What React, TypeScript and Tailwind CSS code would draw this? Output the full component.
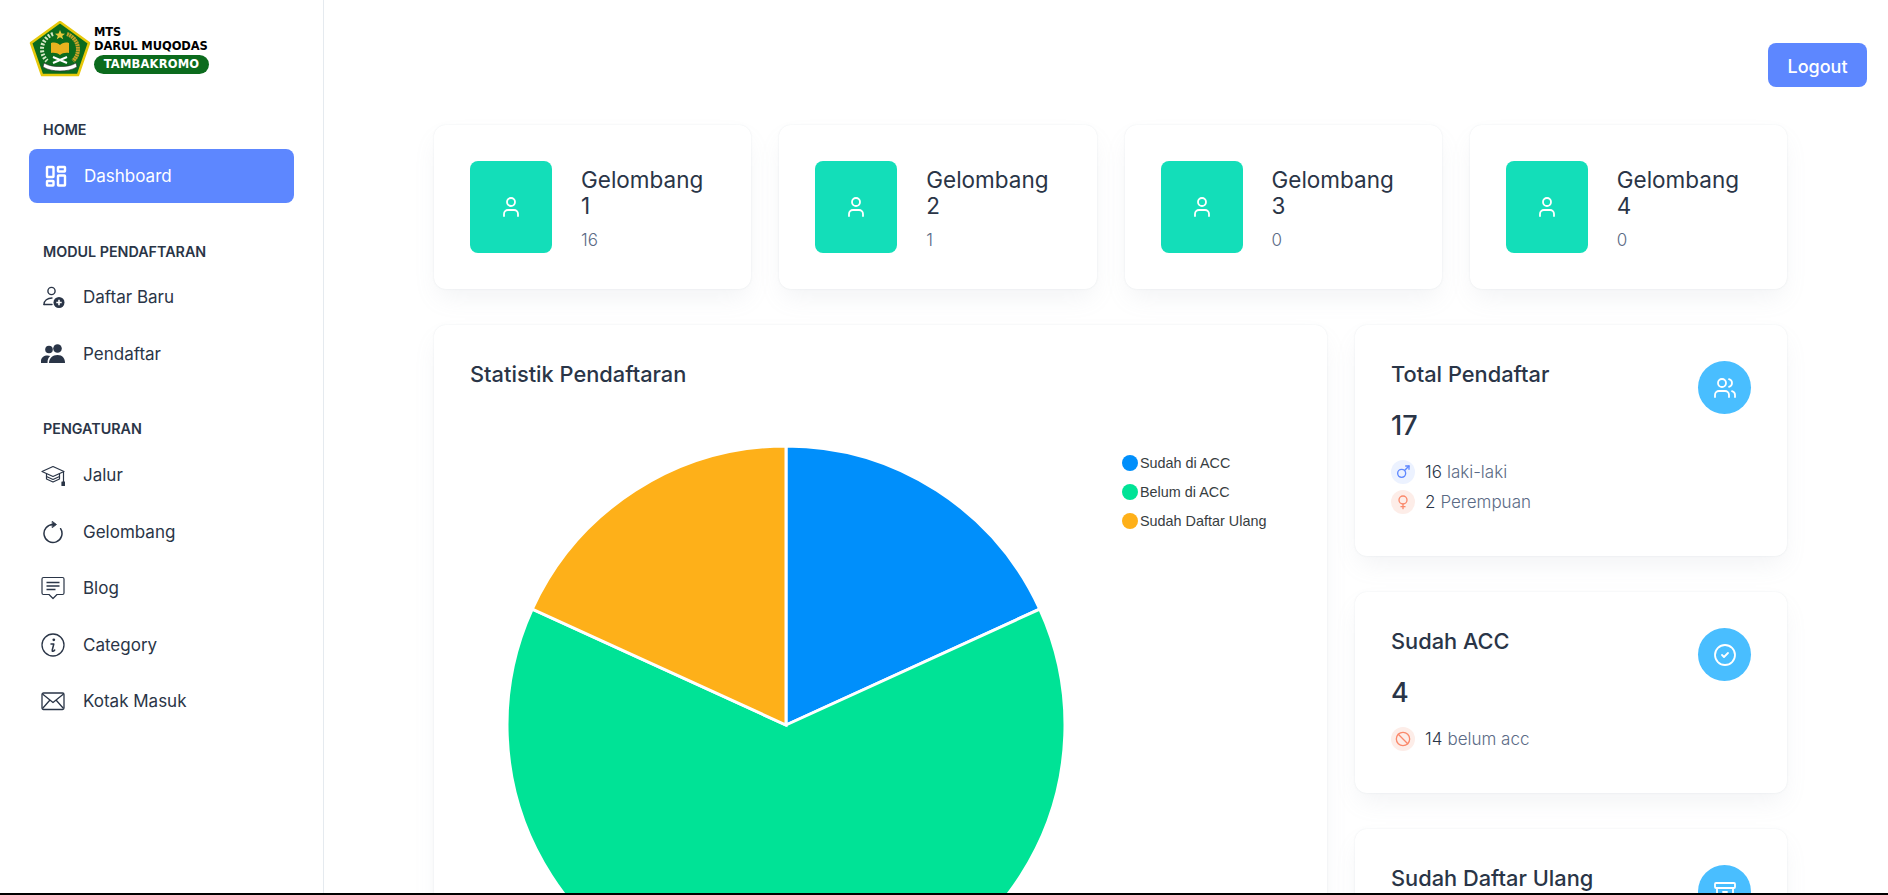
import { CircleCheck, Ban, Mars, Venus, User, Users, Archive } from "lucide-react";
import type { ReactNode } from "react";

const font = "font-['Inter','Noto_Sans',sans-serif]";

const UserPlusIcon = () => (
  <svg viewBox="0 0 24 24" className="size-6 text-[#2a3547]" fill="none" stroke="currentColor" strokeWidth="1.4">
    <circle cx="10.500" cy="6" r="3.600" />
    <path d="M3 19.500c0-4 3.500-6.500 8-6.500" strokeLinecap="round" />
    <path d="M3 19.500h8" strokeLinecap="round" />
    <circle cx="18" cy="17.500" r="5.500" fill="currentColor" stroke="none" />
    <path d="M18 14.800v5.400M15.300 17.500h5.400" stroke="#fff" strokeWidth="1.600" />
  </svg>
);

const PeopleIcon = () => (
  <svg viewBox="0 0 24 24" className="size-6 text-[#2a3547]" fill="currentColor">
    <circle cx="8" cy="7.500" r="3.800" />
    <circle cx="16.500" cy="6.500" r="4.300" />
    <path d="M0 21v-2c0-3.500 3-5.500 6.500-5.500 1 0 2 .2 2.700.5C7.400 15.300 6.500 17.500 6.500 21z" />
    <path d="M8 21c0-4.500 3.500-8 8.500-8s7.500 3.500 7.500 8z" />
  </svg>
);

const CapIcon = () => (
  <svg viewBox="0 0 24 24" className="size-6 text-[#2a3547]" fill="none" stroke="currentColor" strokeWidth="1.200" strokeLinejoin="round">
    <path d="M12 3.500 1 8.500l11 5 11-5z" />
    <path d="M5.500 10.500v3l6.500 3 6.500-3v-3" />
    <path d="M5.500 13.500v2.500l6.500 3 6.500-3v-2.500" />
    <path d="M22.500 9v10" />
    <rect x="21" y="19" width="3" height="3.500" fill="currentColor" />
  </svg>
);

const RefreshIcon = () => (
  <svg viewBox="0 0 24 24" className="size-6 text-[#2a3547]" fill="none" stroke="currentColor" strokeWidth="1.500" strokeLinecap="round">
    <path d="M12 4.500a9 9 0 1 0 7.600 4.200" />
    <path d="M11.500 1.500 15.500 4.500 11.500 7.500z" fill="currentColor" strokeWidth="0.800" strokeLinejoin="round" />
  </svg>
);

const BlogIcon = () => (
  <svg viewBox="0 0 24 24" className="size-6 text-[#2a3547]" fill="none" stroke="currentColor" strokeWidth="1.200" strokeLinejoin="round">
    <path d="M2.500 1.500h19a1.500 1.500 0 0 1 1.500 1.500v14a1.500 1.500 0 0 1-1.500 1.500H16L12 22.500 8 18.500H2.500A1.500 1.500 0 0 1 1 17V3a1.500 1.500 0 0 1 1.500-1.500z" />
    <path d="M5.500 6.500h13M5.500 10h13M5.500 13.500h9" strokeWidth="1.400" />
  </svg>
);

const InfoIcon = () => (
  <svg viewBox="0 0 24 24" className="size-6 text-[#2a3547]" fill="none" stroke="currentColor" strokeWidth="1.300">
    <circle cx="12" cy="12" r="11" />
    <circle cx="12.800" cy="6.800" r="1.400" fill="currentColor" stroke="none" />
    <path d="M10 11h2.800l-1.600 6.200c-.2.700.1 1 .6 1 .6 0 1.300-.4 1.900-1.200" strokeWidth="1.500" strokeLinecap="round" strokeLinejoin="round" />
  </svg>
);

const EnvelopeIcon = () => (
  <svg viewBox="0 0 24 24" className="size-6 text-[#2a3547]" fill="none" stroke="currentColor" strokeWidth="1.300" strokeLinejoin="round">
    <rect x="1" y="4" width="22" height="16.500" rx="1.500" />
    <path d="m1.500 5 10.500 8.500L22.500 5M1.500 19.500 9 11M22.500 19.500 15 11" />
  </svg>
);

const DashIcon = () => (
  <svg viewBox="0 0 24 24" className="size-6 text-white" fill="none" stroke="currentColor" strokeWidth="2.400" strokeLinejoin="round">
    <rect x="3" y="3" width="6.500" height="10" rx="0.500" />
    <rect x="14" y="3" width="7" height="4.500" rx="0.500" />
    <rect x="3" y="17" width="6.500" height="4.500" rx="0.500" />
    <rect x="14" y="11.500" width="7" height="10" rx="0.500" />
  </svg>
);

const Logo = () => (
  <div className="flex items-center gap-[3px] h-[58px]">
    <svg viewBox="0 0 62 56" className="w-[62px] h-[56px] shrink-0">
      <path d="M31 1 60 22 49 54H13L2 22z" fill="#0b6b1d" stroke="#e6c80a" strokeWidth="2.500" strokeLinejoin="round" />
      <path d="m31 9 1.500 3.500 3.500.2-2.800 2.200 1 3.400-3.200-2-3.200 2 1-3.400-2.800-2.200 3.500-.2z" fill="#e8c93a" />
      <path d="M24 13c-6 2-11 8-11 15 0 5 2 9 5 12" fill="none" stroke="#d6e8c8" strokeWidth="4" strokeDasharray="2 1.500" />
      <path d="M38 13c6 2 11 8 11 15 0 5-2 9-5 12" fill="none" stroke="#c9a227" strokeWidth="4" strokeDasharray="2 .5" />
      <path d="M22 22c4-1 7 0 9 2 2-2 5-3 9-2v10c-4-.5-7 .5-9 2-2-1.500-5-2.500-9-2z" fill="#e8b21f" />
      <path d="m24 36 14 6M38 36l-14 6" stroke="#fff" strokeWidth="2" />
      <path d="M15 42c5 3 10 3.500 16 3.500S42 45 47 42l1 4c-5 3-11 4-17 4s-12-1-17-4z" fill="#fff" stroke="#222" strokeWidth=".6" />
    </svg>
    <div className="flex flex-col font-['DejaVu_Sans',Arial,sans-serif] font-bold text-black leading-none">
      <span className="text-[11.500px] leading-[14px] tracking-[-0.200px]">MTS</span>
      <span className="text-[11.500px] leading-[14px] tracking-[-0.100px] whitespace-nowrap">DARUL MUQODAS</span>
      <span className="mt-[2px] h-[19px] w-[115px] rounded-full bg-[#0b6b1d] text-white text-[11.500px] leading-[19px] tracking-[0.200px] text-center">TAMBAKROMO</span>
    </div>
  </div>
);

const NavItem = ({ icon, label, active }: { icon: ReactNode; label: string; active?: boolean }) => (
  <a className={`flex items-center h-[54px] rounded-lg text-[17px] ${active ? "bg-[#5d87ff] text-white pl-[15px] gap-[16px]" : "text-[#2a3547] pl-[12px] gap-[18px]"}`}>
    <span className="flex w-[24px] justify-center shrink-0">{icon}</span>
    <span className="pt-[2px]">{label}</span>
  </a>
);

const SectionLabel = ({ children }: { children: ReactNode }) => (
  <div className="pl-[14px] text-[14.300px] font-semibold text-[#2a3547] leading-[20px]">{children}</div>
);

const Sidebar = () => (
  <aside className="w-[324px] shrink-0 border-r border-[#e5eaef] bg-white px-[29px] pt-[20px]">
    <Logo />
    <div className="mt-[42px]">
      <SectionLabel>HOME</SectionLabel>
      <div className="mt-[9px]">
        <NavItem active label="Dashboard" icon={<DashIcon />} />
      </div>
    </div>
    <div className="mt-[39px]">
      <SectionLabel>MODUL PENDAFTARAN</SectionLabel>
      <div className="mt-[8px] flex flex-col gap-[3px]">
        <NavItem label="Daftar Baru" icon={<UserPlusIcon />} />
        <NavItem label="Pendaftar" icon={<PeopleIcon />} />
      </div>
    </div>
    <div className="mt-[38px]">
      <SectionLabel>PENGATURAN</SectionLabel>
      <div className="mt-[9px] flex flex-col gap-[2.500px]">
        <NavItem label="Jalur" icon={<CapIcon />} />
        <NavItem label="Gelombang" icon={<RefreshIcon />} />
        <NavItem label="Blog" icon={<BlogIcon />} />
        <NavItem label="Category" icon={<InfoIcon />} />
        <NavItem label="Kotak Masuk" icon={<EnvelopeIcon />} />
      </div>
    </div>
  </aside>
);

const cardCls = "rounded-xl bg-white shadow-[0_0_2px_0_rgba(145,158,171,0.2),0_12px_24px_-4px_rgba(145,158,171,0.12)]";

const WaveCard = ({ n, count }: { n: number; count: number }) => (
  <div className={`${cardCls} flex items-center h-[164px] pl-[36px] gap-[29px]`}>
    <div className="flex h-[92px] w-[82px] shrink-0 items-center justify-center rounded-lg bg-[#13deb9]">
      <User className="size-6 text-white" strokeWidth={1.800} />
    </div>
    <div className="pt-[5px]">
      <div className="w-[130px] text-[22.500px] leading-[26px] text-[#2a3547]">Gelombang {n}</div>
      <div className="mt-[9px] text-[17px] leading-[24px] font-light text-[#5a6a85]">{count}</div>
    </div>
  </div>
);

const polar = (deg: number, r: number) => {
  const a = ((deg - 90) * Math.PI) / 180;
  return `${(r * Math.cos(a)).toFixed(2)} ${(r * Math.sin(a)).toFixed(2)}`;
};

const slices = [
  { from: 0, to: 65.450, color: "#008ffb" },
  { from: 65.450, to: 294.550, color: "#00e396" },
  { from: 294.550, to: 360, color: "#feb019" },
];

const legend = [
  { label: "Sudah di ACC", color: "#008ffb" },
  { label: "Belum di ACC", color: "#00e396" },
  { label: "Sudah Daftar Ulang", color: "#feb019" },
];

const PieChart = () => (
  <svg viewBox="-280 -280 560 560" className="w-[560px] h-[560px] shrink-0">
    {slices.map((s) => (
      <path
        key={s.color}
        d={`M0 0L${polar(s.from, 279)}A279 279 0 ${s.to - s.from > 180 ? 1 : 0} 1 ${polar(s.to, 279)}Z`}
        fill={s.color}
        stroke="#fff"
        strokeWidth="3"
      />
    ))}
  </svg>
);

const ChartCard = () => (
  <div className={`${cardCls} h-[700px] px-[36px] pt-[36px]`}>
    <h2 className="text-[21.800px] leading-[27px] font-medium text-[#2a3547]">Statistik Pendaftaran</h2>
    <div className="mt-[57px] flex">
      <div className="ml-[36px]">
        <PieChart />
      </div>
      <div className="ml-[56px] mt-[9px] flex flex-col gap-[11px] font-['Liberation_Sans',Arial,sans-serif] text-[14.400px] leading-[18px] text-[#373d3f]">
        {legend.map((l) => (
          <div key={l.label} className="flex items-center gap-[2px]">
            <span className="size-[16px] rounded-full" style={{ background: l.color }} />
            <span className="whitespace-nowrap">{l.label}</span>
          </div>
        ))}
      </div>
    </div>
  </div>
);

const StatRow = ({ icon, bg, value, text }: { icon: ReactNode; bg: string; value: string; text: string }) => (
  <div className="flex items-center gap-[10px] text-[17px] leading-[24px] font-light">
    <span className={`flex size-[24px] items-center justify-center rounded-full ${bg}`}>{icon}</span>
    <span className="text-[#2a3547]">{value}</span>
    <span className="text-[#5a6a85] -ml-[5px]">{text}</span>
  </div>
);

const StatCard = ({ title, value, icon, children, className }: { title: string; value?: string; icon: ReactNode; children?: ReactNode; className: string }) => (
  <div className={`${cardCls} ${className} flex justify-between pl-[36px] pr-[36px] pt-[36px]`}>
    <div>
      <h3 className="text-[21.800px] leading-[27px] font-medium text-[#2a3547]">{title}</h3>
      {value && <div className="mt-[22px] text-[27px] leading-[32px] font-medium text-[#2a3547]">{value}</div>}
      {children && <div className="mt-[18px] flex flex-col gap-[6px]">{children}</div>}
    </div>
    <div className="flex size-[53px] items-center justify-center rounded-full bg-[#49beff] text-white">{icon}</div>
  </div>
);

export default function App() {
  return (
    <div className={font}>
      <div className="flex h-[893px] overflow-hidden bg-white">
        <Sidebar />
        <main className="min-w-0 flex-1 pl-[110px] pr-[21px]">
          <div className="flex justify-end pt-[43px] h-[125px]">
            <button className="h-[44px] w-[99px] rounded-lg bg-[#5d87ff] pt-[2px] text-[18px] font-medium text-white">Logout</button>
          </div>
          <div className="mr-[80px]">
            <div className="grid grid-cols-4 gap-[28px]">
              <WaveCard n={1} count={16} />
              <WaveCard n={2} count={1} />
              <WaveCard n={3} count={0} />
              <WaveCard n={4} count={0} />
            </div>
            <div className="mt-[36px] flex gap-[28px]">
              <div className="w-[893px] shrink-0">
                <ChartCard />
              </div>
              <div className="flex min-w-0 flex-1 flex-col gap-[36px]">
                <StatCard title="Total Pendaftar" value="17" className="h-[231px]" icon={<Users className="size-6" strokeWidth={1.800} />}>
                  <StatRow bg="bg-[#ecf2ff]" value="16" text="laki-laki" icon={<Mars className="size-4 text-[#5d87ff]" />} />
                  <StatRow bg="bg-[#fdede8]" value="2" text="Perempuan" icon={<Venus className="size-4 text-[#fa896b]" />} />
                </StatCard>
                <StatCard title="Sudah ACC" value="4" className="h-[201px]" icon={<CircleCheck className="size-6" strokeWidth={1.800} />}>
                  <StatRow bg="bg-[#fdede8]" value="14" text="belum acc" icon={<Ban className="size-4 text-[#fa896b]" />} />
                </StatCard>
                <StatCard title="Sudah Daftar Ulang" className="h-[201px]" icon={<Archive className="size-6" strokeWidth={1.800} />} />
              </div>
            </div>
          </div>
        </main>
      </div>
      <div className="h-[2px] bg-black" />
    </div>
  );
}
